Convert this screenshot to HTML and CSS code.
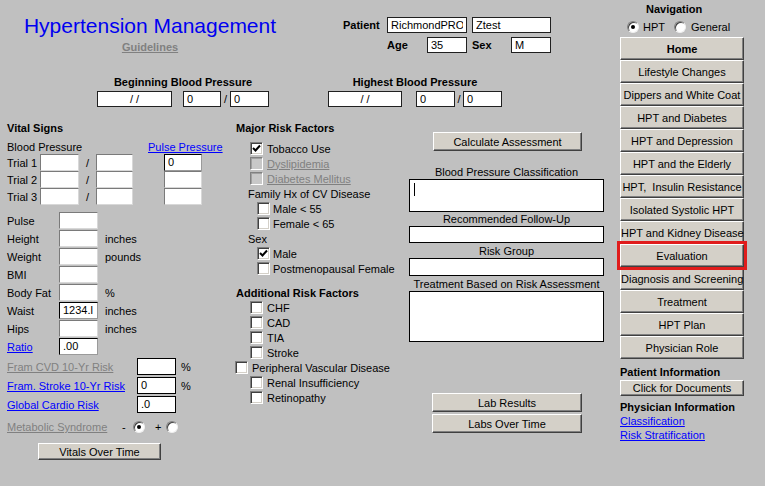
FILE: index.html
```html
<!DOCTYPE html>
<html lang="en">
<head>
<meta charset="utf-8">
<title>Hypertension Management</title>
<link rel="stylesheet" href="styles.css">
</head>
<body>
<div class="page">
  <div class="main">
    <header class="top">
      <div class="titleblock">
        <h1 class="title">Hypertension Management</h1>
        <span class="guidelines">Guidelines</span>
      </div>
      <div class="patient">
        <div class="prow">
          <span class="plabel w-patient">Patient</span>
          <input class="field w80" value="RichmondPRODUCTION" readonly>
          <input class="field w79 ml5" value="Ztest" readonly>
        </div>
        <div class="prow ml44">
          <span class="plabel w40">Age</span>
          <input class="field w40" value="35" readonly>
          <span class="plabel w39 ml5">Sex</span>
          <input class="field w40" value="M" readonly>
        </div>
      </div>
    </header>

    <section class="bp-row">
      <div class="bp-group g1">
        <div class="bp-label">Beginning Blood Pressure</div>
        <div class="bp-boxes">
          <input class="field date w75" value="/ /" readonly>
          <input class="field w38 ml11" value="0" readonly>
          <span class="bslash w9">/</span>
          <input class="field w39" value="0" readonly>
        </div>
      </div>
      <div class="bp-group g2">
        <div class="bp-label">Highest Blood Pressure</div>
        <div class="bp-boxes">
          <input class="field date w74" value="/ /" readonly>
          <input class="field w39 ml14" value="0" readonly>
          <span class="bslash w8">/</span>
          <input class="field w39" value="0" readonly>
        </div>
      </div>
    </section>

    <div class="cols">
      <section class="vitals">
        <div class="sec-title">Vital Signs</div>
        <div class="bp-head"><span class="w141">Blood Pressure</span><span class="link">Pulse Pressure</span></div>
        <div class="trials">
          <div class="trial"><span class="tlabel">Trial 1</span><span class="ibox w39"></span><span class="tslash">/</span><span class="ibox w37"></span><span class="fbox w38 ml31">0</span></div>
          <div class="trial"><span class="tlabel">Trial 2</span><span class="ibox w39"></span><span class="tslash">/</span><span class="ibox w37"></span><span class="ibox w38 ml31"></span></div>
          <div class="trial"><span class="tlabel">Trial 3</span><span class="ibox w39"></span><span class="tslash">/</span><span class="ibox w37"></span><span class="ibox w38 ml31"></span></div>
        </div>
        <div class="measures">
          <div class="mrow"><span class="mlabel">Pulse</span><span class="ibox w39"></span></div>
          <div class="mrow"><span class="mlabel">Height</span><span class="ibox w39"></span><span class="unit">inches</span></div>
          <div class="mrow"><span class="mlabel">Weight</span><span class="ibox w39"></span><span class="unit">pounds</span></div>
          <div class="mrow"><span class="mlabel">BMI</span><span class="ibox w39"></span></div>
          <div class="mrow"><span class="mlabel">Body Fat</span><span class="ibox w39"></span><span class="unit">%</span></div>
          <div class="mrow"><span class="mlabel">Waist</span><span class="fbox w39">1234.l</span><span class="unit">inches</span></div>
          <div class="mrow"><span class="mlabel">Hips</span><span class="ibox w39"></span><span class="unit">inches</span></div>
          <div class="mrow"><span class="mlabel"><span class="link">Ratio</span></span><span class="fbox w39">.00</span></div>
        </div>
        <div class="risks">
          <div class="rrow"><span class="rlabel"><span class="dim-link">Fram CVD 10-Yr Risk</span></span><span class="fbox w39"></span><span class="pct">%</span></div>
          <div class="rrow"><span class="rlabel"><span class="link">Fram. Stroke 10-Yr Risk</span></span><span class="fbox w39">0</span><span class="pct">%</span></div>
          <div class="rrow"><span class="rlabel"><span class="link">Global Cardio Risk</span></span><span class="fbox w39">.0</span></div>
        </div>
        <div class="metab">
          <span class="w115"><span class="dim-link">Metabolic Syndrome</span></span>
          <span class="sign w11">-</span>
          <span class="radio on"></span>
          <span class="sign plus w11">+</span>
          <span class="radio"></span>
        </div>
        <button class="btn vot">Vitals Over Time</button>
      </section>

      <section class="risk">
        <div class="sec-title">Major Risk Factors</div>
        <div class="cklist">
          <div class="ck l1"><span class="cb"><svg viewBox="0 0 11 11" width="11" height="11"><polyline points="2,5 4.5,7.5 9,2.5" fill="none" stroke="#000" stroke-width="2"/></svg></span><span>Tobacco Use</span></div>
          <div class="ck l1"><span class="cb dis"></span><span class="dim-link">Dyslipidemia</span></div>
          <div class="ck l1"><span class="cb dis"></span><span class="dim-link">Diabetes Mellitus</span></div>
          <div class="ck sub">Family Hx of CV Disease</div>
          <div class="ck l2"><span class="cb"></span><span>Male &lt; 55</span></div>
          <div class="ck l2"><span class="cb"></span><span>Female &lt; 65</span></div>
          <div class="ck sub">Sex</div>
          <div class="ck l2"><span class="cb"><svg viewBox="0 0 11 11" width="11" height="11"><polyline points="2,5 4.5,7.5 9,2.5" fill="none" stroke="#000" stroke-width="2"/></svg></span><span>Male</span></div>
          <div class="ck l2"><span class="cb"></span><span>Postmenopausal Female</span></div>
        </div>
        <div class="sec-title add">Additional Risk Factors</div>
        <div class="cklist">
          <div class="ck l1"><span class="cb"></span><span>CHF</span></div>
          <div class="ck l1"><span class="cb"></span><span>CAD</span></div>
          <div class="ck l1"><span class="cb"></span><span>TIA</span></div>
          <div class="ck l1"><span class="cb"></span><span>Stroke</span></div>
          <div class="ck l0"><span class="cb"></span><span>Peripheral Vascular Disease</span></div>
          <div class="ck l1"><span class="cb"></span><span>Renal Insufficiency</span></div>
          <div class="ck l1"><span class="cb"></span><span>Retinopathy</span></div>
        </div>
      </section>

      <section class="assess">
        <button class="btn calc">Calculate Assessment</button>
        <div class="alabel first">Blood Pressure Classification</div>
        <div class="abox h33"><span class="caret"></span></div>
        <div class="alabel">Recommended Follow-Up</div>
        <div class="abox h17"></div>
        <div class="alabel mt1">Risk Group</div>
        <div class="abox h18"></div>
        <div class="alabel mt1">Treatment Based on Risk Assessment</div>
        <div class="abox h51"></div>
        <button class="btn lab first-lab">Lab Results</button>
        <button class="btn lab">Labs Over Time</button>
      </section>
    </div>
  </div>

  <nav class="nav">
    <div class="nav-title">Navigation</div>
    <div class="nav-radios">
      <span class="radio on"></span><span class="rtext">HPT</span>
      <span class="radio gen"></span><span class="rtext">General</span>
    </div>
    <div class="nav-buttons">
      <button class="btn nbtn home">Home</button>
      <button class="btn nbtn">Lifestyle Changes</button>
      <button class="btn nbtn">Dippers and White Coat</button>
      <button class="btn nbtn">HPT and Diabetes</button>
      <button class="btn nbtn">HPT and Depression</button>
      <button class="btn nbtn">HPT and the Elderly</button>
      <button class="btn nbtn">HPT,&nbsp; Insulin Resistance</button>
      <button class="btn nbtn">Isolated Systolic HPT</button>
      <button class="btn nbtn">HPT and Kidney Disease</button>
      <button class="btn nbtn current">Evaluation</button>
      <button class="btn nbtn">Diagnosis and Screening</button>
      <button class="btn nbtn">Treatment</button>
      <button class="btn nbtn">HPT Plan</button>
      <button class="btn nbtn">Physician Role</button>
    </div>
    <div class="info-title pi">Patient Information</div>
    <button class="btn docs">Click for Documents</button>
    <div class="info-title phys">Physician Information</div>
    <div class="nav-link link">Classification</div>
    <div class="nav-link link">Risk Stratification</div>
  </nav>
</div>
</body>
</html>
```
FILE: styles.css
```css
* { box-sizing: border-box; }
html, body { margin: 0; padding: 0; }
body {
  background: #c0c0c0;
  font: 11px "Liberation Sans", Arial, sans-serif;
  color: #000;
  width: 765px;
  height: 486px;
  overflow: hidden;
}
.page { display: flex; }
.main { width: 612px; }

/* generic */
.link { color: #0000ff; text-decoration: underline; }
.dim-link { color: #808080; text-decoration: underline; }

.field {
  font: inherit;
  color: #000;
  background: #fff;
  border: 1px solid #202020;
  height: 16px;
  padding: 0 3px;
  margin: 0;
  outline: none;
  flex: none;
}
.field.date { text-align: center; }

.btn {
  font: inherit;
  color: #000;
  background: #d4d0c8;
  border: 1px solid;
  border-color: #fff #404040 #404040 #fff;
  box-shadow: inset -1px -1px 0 #808080;
  padding: 0;
  margin: 0;
  display: block;
  text-align: center;
  cursor: default;
}

/* header */
.top { display: flex; height: 62px; }
.titleblock {
  width: 300px;
  display: flex;
  flex-direction: column;
  align-items: center;
  padding-top: 14px;
}
.title {
  margin: 0;
  font-size: 21px;
  font-weight: normal;
  line-height: 24px;
  color: #0000f0;
}
.guidelines {
  margin-top: 2px;
  line-height: 14px;
  font-weight: bold;
  color: #808080;
  text-decoration: underline;
}
.patient {
  margin-left: 43px;
  padding-top: 17px;
  display: flex;
  flex-direction: column;
  gap: 4px;
}
.prow { display: flex; align-items: center; height: 16px; }
.plabel { font-weight: bold; flex: none; }
.w-patient { width: 44px; }

/* blood pressure row */
.bp-row {
  display: flex;
  gap: 59px;
  padding-left: 97px;
  margin-top: 13px;
}
.bp-group { display: flex; flex-direction: column; }
.bp-group.g1 { width: 172px; }
.bp-group.g2 { width: 174px; }
.bp-label { font-weight: bold; line-height: 14px; text-align: center; }
.bp-boxes { display: flex; align-items: center; margin-top: 2px; }
.bslash { text-align: center; flex: none; }

/* columns */
.cols { display: flex; margin-top: 14px; }
.sec-title { font-weight: bold; line-height: 14px; }

/* vitals */
.vitals { width: 230px; padding-left: 7px; display: flex; flex-direction: column; }
.bp-head { display: flex; line-height: 14px; margin-top: 5px; }
.trial { display: flex; align-items: center; height: 17px; }
.tlabel { width: 33px; flex: none; line-height: 17px; padding-top: 2px; }
.tslash { width: 17px; text-align: center; flex: none; }
.ibox, .fbox {
  display: block;
  flex: none;
  height: 17px;
  background: #fff;
  border: 1px solid;
  border-color: #7a7a7a #d8d8d8 #d8d8d8 #7a7a7a;
  padding: 0 3px;
  line-height: 15px;
  white-space: nowrap;
  overflow: hidden;
}
.fbox { border-color: #000 #9a9a9a #9a9a9a #000; }
.measures { margin-top: 7px; display: flex; flex-direction: column; }
.mrow { display: flex; align-items: flex-start; height: 18px; }
.mlabel { width: 52px; flex: none; line-height: 18px; }
.unit { margin-left: 7px; line-height: 18px; }
.risks { margin-top: 2px; display: flex; flex-direction: column; gap: 2px; }
.rrow { display: flex; align-items: center; height: 17px; }
.rlabel { width: 130px; flex: none; }
.rrow .fbox { border: 1px solid #000; }
.pct { margin-left: 5px; }
.metab { display: flex; align-items: center; height: 14px; margin-top: 7px; }
.sign { flex: none; }
.plus { margin-left: 10px; }
.vot { width: 123px; height: 17px; margin: 9px 0 0 31px; }

.radio {
  display: block;
  flex: none;
  width: 12px;
  height: 12px;
  border-radius: 50%;
  background: #fff;
  border: 1px solid;
  border-color: #808080 #f0f0f0 #f0f0f0 #808080;
  box-shadow: inset 1px 1px 0 #404040;
  position: relative;
}
.radio.on::after {
  content: "";
  position: absolute;
  left: 3px;
  top: 3px;
  width: 4px;
  height: 4px;
  border-radius: 50%;
  background: #000;
}

/* risk factors */
.risk { width: 175px; padding-left: 6px; display: flex; flex-direction: column; }
.cklist { display: flex; flex-direction: column; margin-top: 6px; }
.sec-title.add { margin-top: 10px; }
.sec-title.add + .cklist { margin-top: 0; }
.ck { display: flex; align-items: center; height: 15px; gap: 4px; white-space: nowrap; }
.ck.l1 { margin-left: 14px; }
.ck.l2 { margin-left: 21px; gap: 3px; }
.ck.l0 { margin-left: -1px; }
.ck.sub { margin-left: 12px; }
.cb {
  display: flex;
  align-items: center;
  justify-content: center;
  flex: none;
  width: 13px;
  height: 13px;
  background: #fff;
  border: 1px solid;
  border-color: #808080 #fff #fff #808080;
  box-shadow: inset 1px 1px 0 #404040, inset -1px -1px 0 #d4d0c8;
}
.cb.dis { background: #c8c8c8; box-shadow: inset 1px 1px 0 #a0a0a0; }

/* assessment */
.assess {
  width: 207px;
  padding-left: 4px;
  padding-right: 8px;
  display: flex;
  flex-direction: column;
}
.calc { width: 149px; height: 19px; margin: 11px 0 0 24px; }
.alabel { text-align: center; line-height: 14px; }
.alabel.first { margin-top: 14px; }
.abox { background: #fff; border: 1px solid #000; position: relative; }
.h17 { height: 17px; } .h18 { height: 18px; } .h33 { height: 33px; } .h51 { height: 51px; }
.caret {
  position: absolute;
  left: 4px;
  top: 3px;
  width: 1px;
  height: 13px;
  background: #000;
}
.lab { width: 150px; height: 19px; margin: 2px 0 0 23px; }
.lab.first-lab { margin-top: 51px; }

/* navigation */
.nav { width: 153px; padding-left: 8px; display: flex; flex-direction: column; }
.nav-title { font-weight: bold; line-height: 13px; padding-top: 3px; margin-left: 26px; }
.nav-radios { display: flex; align-items: center; height: 14px; margin-top: 4px; padding-left: 7px; }
.rtext { margin-left: 4px; }
.radio.gen { margin-left: 9px; }
.radio.gen + .rtext { margin-left: 5px; }
.nav-buttons { display: flex; flex-direction: column; margin-top: 3px; width: 124px; }
.nbtn { width: 124px; height: 23px; white-space: nowrap; }
.nbtn.home { font-weight: bold; }
.nbtn.current { outline: 3px solid #e01c1c; outline-offset: 0; position: relative; z-index: 1; }
.info-title { font-weight: bold; line-height: 13px; }
.info-title.pi { margin-top: 7px; }
.docs { width: 124px; height: 16px; margin-top: 1px; }
.info-title.phys { margin-top: 4px; line-height: 14px; }
.nav-link { line-height: 14px; align-self: flex-start; }

/* utilities (last so they win) */
.w37 { width: 37px; } .w38 { width: 38px; } .w39 { width: 39px; }
.w40 { width: 40px; } .w74 { width: 74px; } .w75 { width: 75px; }
.w79 { width: 79px; } .w80 { width: 80px; } .w8 { width: 8px; } .w9 { width: 9px; }
.w11 { width: 11px; } .w115 { width: 115px; } .w141 { width: 141px; }
.plabel.w39 { width: 39px; }
.ml5 { margin-left: 5px; } .ml11 { margin-left: 11px; } .ml14 { margin-left: 14px; }
.ml31 { margin-left: 31px; } .ml44 { margin-left: 44px; }
.mt1 { margin-top: 1px; }
```
